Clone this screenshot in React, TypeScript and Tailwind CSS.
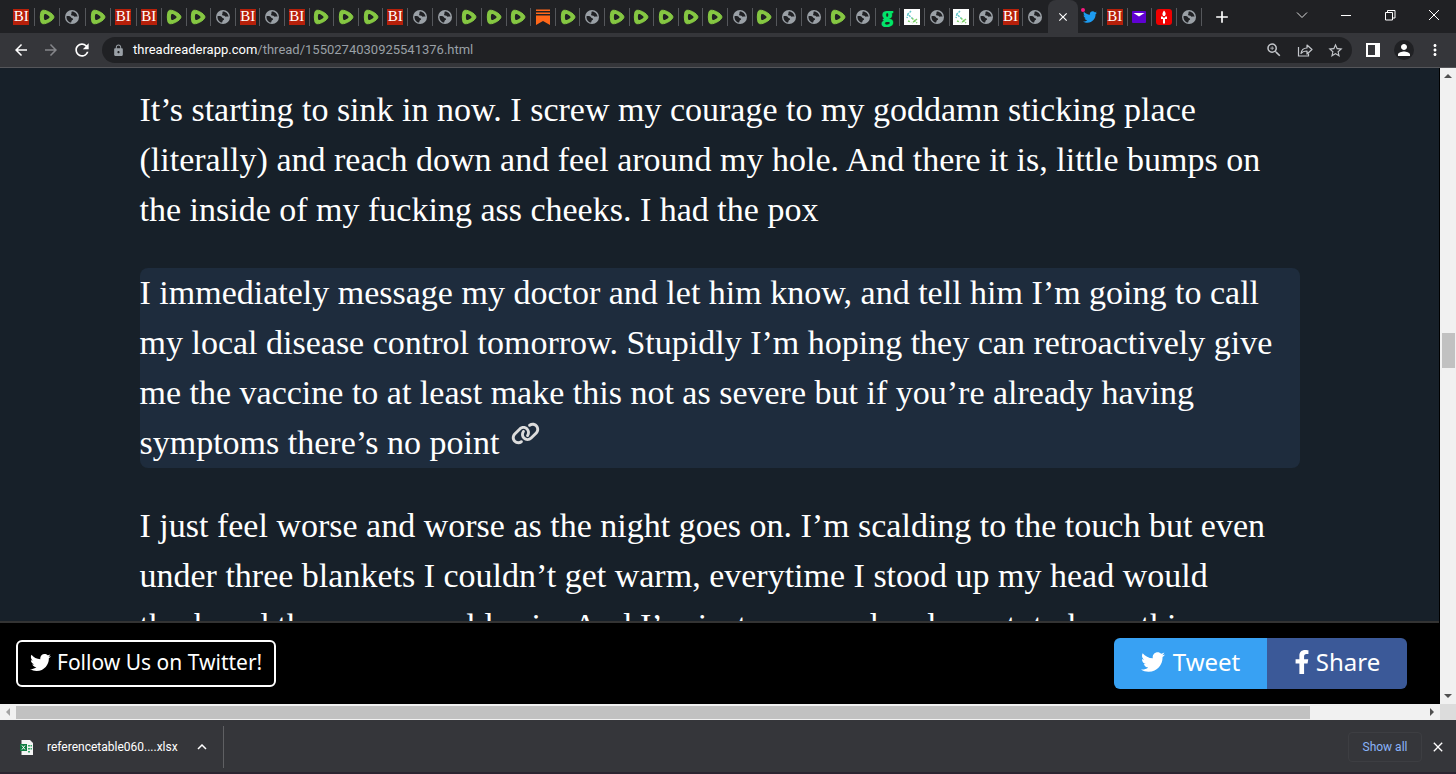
import React from 'react';
import { FaTwitter, FaFacebookF } from 'react-icons/fa';
import { FaLink } from 'react-icons/fa6';
import {
    MdArrowBack,
    MdArrowForward,
    MdRefresh,
    MdLock,
    MdOutlineZoomIn,
    MdStarBorder,
    MdMoreVert,
    MdPerson,
    MdClose,
    MdAdd,
} from 'react-icons/md';

type Site = 'bi' | 'rumble' | 'globe' | 'substack' | 'g' | 'chem' | 'twitter' | 'yahoo' | 'torch';

const firstTabs: Site[] = ['bi', 'rumble', 'globe', 'rumble', 'bi', 'bi'];

const middleTabs: Site[] = [
    'rumble', 'rumble', 'globe', 'bi', 'globe', 'bi', 'rumble', 'rumble', 'rumble',
    'bi', 'globe', 'globe', 'rumble', 'rumble', 'rumble', 'substack', 'rumble', 'globe',
    'rumble', 'rumble', 'rumble', 'rumble', 'rumble', 'globe', 'rumble', 'globe', 'globe',
    'rumble', 'globe', 'g', 'chem', 'globe', 'chem', 'globe', 'bi', 'globe',
];

const lastTabs: Site[] = ['twitter', 'bi', 'yahoo', 'torch', 'globe'];

const paragraphs = [
    [
        'It’s starting to sink in now. I screw my courage to my goddamn sticking place',
        '(literally) and reach down and feel around my hole. And there it is, little bumps on',
        'the inside of my fucking ass cheeks. I had the pox',
    ],
    [
        'I immediately message my doctor and let him know, and tell him I’m going to call',
        'my local disease control tomorrow. Stupidly I’m hoping they can retroactively give',
        'me the vaccine to at least make this not as severe but if you’re already having',
        'symptoms there’s no point',
    ],
    [
        'I just feel worse and worse as the night goes on. I’m scalding to the touch but even',
        'under three blankets I couldn’t get warm, everytime I stood up my head would',
        'throb and the room would spin. And I’m just so so sad and upset, to have this',
    ],
];

const Favicon: React.FC<{ site: Site }> = ({ site }) => {
    switch (site) {
        case 'bi':
            return (
                <span className="flex h-4 w-4 items-center justify-center bg-[#b7200a] font-['Liberation_Serif',serif] text-[15px] leading-none text-white">
                    BI
                </span>
            );
        case 'rumble':
            return (
                <svg width="16" height="16" viewBox="0 0 16 16">
                    <path d="M2.500 2C4.500-.8 15 4.600 15 8S4.500 16.800 2.500 14C.9 11.800.9 4.200 2.500 2Z" fill="#85c742" stroke="#85c742" strokeWidth="1" strokeLinejoin="round" />
                    <path d="M5.600 5.100C6.500 4.300 10.600 6.900 10.600 8s-4.100 3.700-5 2.900-.9-5 0-5.800Z" fill="#202124" />
                </svg>
            );
        case 'globe':
            return (
                <svg width="14" height="14" viewBox="0 0 14 14">
                    <circle cx="7" cy="7" r="7" fill="#9aa0a6" />
                    <path d="M1.500 6.200c1.800-.4 4 0 4.600 1.200.6 1 1.800.6 2 1.600.2 1.200-1.600 1-1.600 2.200l-.4 1.400C3.200 12.200 1.200 9.200 1.500 6.200ZM6.800 1.500c-.8 1 .2 1.700-.6 2.500-.6.8.4 1.800 1.400 1.600 1.200-.2 1 1.200 2.200 1.200 1 0 1.600-.4 2.700 0C12.400 4 9.800 1.400 6.800 1.500Z" fill="#202124" />
                </svg>
            );
        case 'substack':
            return (
                <svg width="14" height="16" viewBox="0 0 14 16">
                    <path d="M0 .5h14v1.500H0zM0 3.500h14V5H0zM0 6.500h14V16l-7-4-7 4z" fill="#ff6719" />
                </svg>
            );
        case 'g':
            return <span className="pb-1 font-['Open_Sans',sans-serif] text-[20px] font-extrabold leading-none text-[#00e36a]">g</span>;
        case 'chem':
            return (
                <svg width="16" height="16" viewBox="0 0 16 16">
                    <path d="M0 0h16v16H0z" fill="#fff" />
                    <path d="M7 2 4 5l2.500 3L9 10M4 5 3 9" fill="none" stroke="#63c5c9" strokeWidth="1.500" strokeDasharray="2 1" />
                    <path d="m8 9 5 5M13 10l-5 4M4 12l3 1" fill="none" stroke="#7dcf6b" strokeWidth="1.500" strokeDasharray="2 1" />
                </svg>
            );
        case 'twitter':
            return (
                <span className="relative text-[14px] text-[#1d9bf0]">
                    <FaTwitter />
                    <span className="absolute -left-0.5 -top-0.5 h-1 w-1 rounded-full bg-[#f91880]" />
                </span>
            );
        case 'yahoo':
            return (
                <svg width="14" height="12" viewBox="0 0 14 12">
                    <rect width="14" height="12" rx="1" fill="#6001d2" />
                    <path d="M1.500 2h11L7 5.500z" fill="#fff" />
                </svg>
            );
        case 'torch':
            return (
                <svg width="16" height="16" viewBox="0 0 16 16">
                    <rect width="16" height="16" rx="3" fill="#f00000" />
                    <path d="M8 1.500c2 2 2.200 4 .8 5.500H7.200C5.800 5.500 6.500 3.500 8 1.500ZM5 7.500h1.500L8 9l1.500-1.500H11V10H9v4.500H7V10H5z" fill="#fff" />
                </svg>
            );
    }
};

const Tab: React.FC<{ site: Site; divider?: boolean }> = ({ site, divider = true }) => (
    <button
        type="button"
        aria-label={`${site} tab`}
        className={`flex h-[18px] min-w-0 flex-1 items-center justify-center border-r ${divider ? 'border-[#55575b]' : 'border-transparent'}`}
    >
        <span className="flex shrink-0 items-center justify-center">
            <Favicon site={site} />
        </span>
    </button>
);

const TabStrip: React.FC = () => (
    <div className="flex h-[33px] shrink-0 items-center bg-[#202124] pl-[9px] text-white">
        <div className="flex w-[153px]">
            {firstTabs.map((site, i) => <Tab key={i} site={site} />)}
        </div>
        <div className="flex w-[886px]">
            {middleTabs.map((site, i) => <Tab key={i} site={site} divider={i < middleTabs.length - 1} />)}
        </div>
        <button type="button" aria-label="Close tab" className="flex h-full w-[30px] items-center justify-center rounded-t-lg bg-[#35363a]">
            <MdClose size={14} />
        </button>
        <div className="flex w-[124px]">
            {lastTabs.map((site, i) => <Tab key={i} site={site} />)}
        </div>
        <button type="button" aria-label="New tab" className="ml-2.5">
            <MdAdd size={20} />
        </button>
        <div className="ml-auto flex h-full items-center pb-1">
            <button type="button" aria-label="Search tabs" className="flex w-11 justify-center">
                <svg width="12" height="8" viewBox="0 0 12 8" fill="none" stroke="#ddd"><path d="m1 1.500 5 5 5-5" /></svg>
            </button>
            <button type="button" aria-label="Minimize" className="flex w-11 justify-center">
                <svg width="10" height="10" viewBox="0 0 10 10" stroke="#fff"><path d="M0 5.500h10" /></svg>
            </button>
            <button type="button" aria-label="Restore" className="flex w-11 justify-center">
                <svg width="12" height="12" viewBox="0 0 12 12" fill="none" stroke="#fff"><path d="M1.500 3.500h7V11h-7zM3.500 3.500v-2h7.500V9H8.500" /></svg>
            </button>
            <button type="button" aria-label="Close window" className="flex w-11 justify-center">
                <svg width="12" height="12" viewBox="0 0 12 12" stroke="#fff"><path d="m1 1 10 10M11 1 1 11" /></svg>
            </button>
        </div>
    </div>
);

const Toolbar: React.FC = () => (
    <div className="flex h-[35px] shrink-0 items-center border-b border-[#55565a] bg-[#35363a] px-3 text-white">
        <button type="button" aria-label="Back"><MdArrowBack size={18} /></button>
        <button type="button" aria-label="Forward" className="ml-3 text-[#85868a]"><MdArrowForward size={18} /></button>
        <button type="button" aria-label="Reload" className="ml-3"><MdRefresh size={20} /></button>
        <div className="ml-2.5 flex h-[26px] flex-1 items-center rounded-full bg-[#202124] pl-2.5 pr-2 text-[#c4c7cb]">
            <MdLock size={13} className="text-[#9aa0a6]" />
            <a href="#address" className="ml-2 flex-1 font-['Roboto',sans-serif] text-[13px] leading-5 text-[#9aa0a6]">
                <span className="text-white">threadreaderapp.com</span>/thread/1550274030925541376.html
            </a>
            <button type="button" aria-label="Zoom"><MdOutlineZoomIn size={18} /></button>
            <button type="button" aria-label="Share page" className="ml-3.5">
                <svg width="16" height="16" viewBox="0 0 16 16" fill="none" stroke="currentColor" strokeWidth="1.200">
                    <path d="M1.500 5v9h10v-2.500" />
                    <path d="M4 11.500c.5-4 3-5.500 6-5.500V3l5 4.500-5 4.500V9c-2.500 0-4.500.5-6 2.500Z" strokeLinejoin="round" />
                </svg>
            </button>
            <button type="button" aria-label="Bookmark" className="ml-3.5"><MdStarBorder size={17} /></button>
        </div>
        <button type="button" aria-label="Side panel" className="ml-3.5">
            <svg width="14" height="14" viewBox="0 0 14 14"><path d="M1 1h12v12H1z" fill="none" stroke="#fff" strokeWidth="2" /><path d="M9 1h4v12H9z" fill="#fff" /></svg>
        </button>
        <button type="button" aria-label="Profile" className="ml-3.5 flex h-5 w-5 items-center justify-center rounded-full bg-[#202124]">
            <MdPerson size={18} />
        </button>
        <button type="button" aria-label="Menu" className="ml-3"><MdMoreVert size={18} /></button>
    </div>
);

const Thread: React.FC = () => (
    <main className="min-h-0 flex-1 overflow-hidden pt-[17px]">
        <div className="mx-auto flex max-w-[1160px] flex-col gap-[33px] font-['Liberation_Serif',serif] text-[34px] leading-[50px] text-white">
            {paragraphs.map((lines, i) => (
                <p key={i} className={i === 1 ? 'rounded-lg bg-[#1e2c3d]' : ''}>
                    {lines.map((line, j) => (
                        <span key={j} className="block h-[50px] whitespace-nowrap">
                            {line}
                            {i === 1 && j === 3 && (
                                <a href="#permalink" aria-label="Permalink" className="text-[#dcdcdc]">
                                    <FaLink size={29} className="mb-1.5 ml-3 inline-block align-baseline" />
                                </a>
                            )}
                        </span>
                    ))}
                </p>
            ))}
        </div>
    </main>
);

const ShareBar: React.FC = () => (
    <footer className="flex h-[83px] shrink-0 items-center justify-between border-t-2 border-[#333] bg-black pl-4 pr-8 font-['Noto_Sans',sans-serif] text-white">
        <a href="#follow" className="flex h-[47px] items-center gap-1.5 rounded-md border-2 border-white px-3 pb-0.5 text-[21px]">
            <FaTwitter size={21} />
            Follow Us on Twitter!
        </a>
        <div className="flex h-[51px] overflow-hidden rounded-md text-[24px]">
            <a href="#tweet" className="flex w-[153px] items-center justify-center gap-2 bg-[#38a1f3] pb-1">
                <FaTwitter size={24} />
                Tweet
            </a>
            <a href="#share" className="flex w-[140px] items-center justify-center gap-0.5 bg-[#3b5998] pb-1 pr-1">
                <FaFacebookF size={24} />
                Share
            </a>
        </div>
    </footer>
);

const DownloadBar: React.FC = () => (
    <div className="flex h-[54px] shrink-0 items-center border-b-2 border-[#2b2430] bg-[#35363a] px-2.5 pt-0.5 font-['Roboto',sans-serif] text-[12px] text-white">
        <svg width="13" height="15" viewBox="0 0 13 15" className="ml-2.5">
            <path d="M1.500 0H10l3 3v12H1.500z" fill="#f4f4f4" />
            <path d="M8 5h2v1.500H8zM8 8h2v1.500H8zM8 11h2v1.500H8zM10.500 5h1.500v1.500h-1.500zM10.500 8h1.500v1.500h-1.500z" fill="#37a869" />
            <path d="M0 4h7v7H0z" fill="#107c41" />
            <path d="m2 5.500 3 4M5 5.500l-3 4" stroke="#fff" />
        </svg>
        <a href="#download" className="ml-3.5 w-[130px]">referencetable060....xlsx</a>
        <button type="button" aria-label="Download options" className="ml-5 flex h-[42px] items-center border-r border-[#5f6063] pr-4">
            <svg width="10" height="6" viewBox="0 0 10 6" fill="none" stroke="#fff" strokeWidth="1.500"><path d="m1 5 4-4 4 4" /></svg>
        </button>
        <button type="button" className="ml-auto h-[30px] w-[74px] rounded border border-[#3d3e42] text-[#8ab4f8]">Show all</button>
        <button type="button" aria-label="Close downloads" className="ml-2"><MdClose size={16} /></button>
    </div>
);

const App: React.FC = () => {
    return (
        <div className="flex h-screen flex-col overflow-hidden bg-[#35363a]">
            <TabStrip />
            <Toolbar />
            <div className="flex min-h-0 flex-1">
                <div className="flex min-w-0 flex-1 flex-col border-r border-black bg-[#172029]">
                    <Thread />
                    <ShareBar />
                </div>
                <div className="flex w-4 flex-col items-center justify-between bg-[#f1f1f1] py-1.5">
                    <svg width="8" height="4" viewBox="0 0 8 4"><path d="m0 4 4-4 4 4z" fill="#505050" /></svg>
                    <div className="mt-[255px] h-[35px] w-[13px] bg-[#c1c1c1]" />
                    <svg width="8" height="4" viewBox="0 0 8 4" className="mt-auto"><path d="m0 0 4 4 4-4z" fill="#505050" /></svg>
                </div>
            </div>
            <div className="flex h-4 shrink-0 items-center bg-[#f1f1f1]">
                <div className="flex w-4 justify-center">
                    <svg width="4" height="8" viewBox="0 0 4 8"><path d="M4 0 0 4l4 4z" fill="#a3a3a3" /></svg>
                </div>
                <div className="mr-[120px] h-[13px] flex-1 bg-[#c1c1c1]" />
                <svg width="4" height="8" viewBox="0 0 4 8"><path d="m0 0 4 4-4 4z" fill="#505050" /></svg>
                <div className="ml-1.5 h-4 w-4 bg-[#dcdcdc]" />
            </div>
            <DownloadBar />
        </div>
    );
};

export default App;
